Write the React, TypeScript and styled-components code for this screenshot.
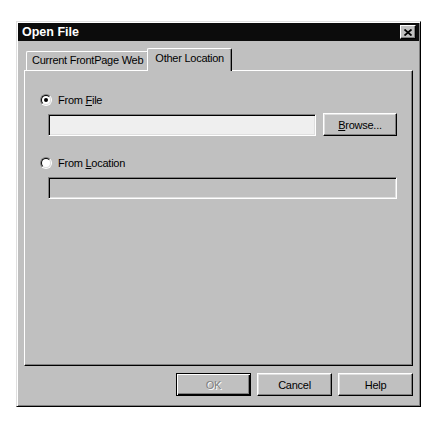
import React from "react";
import styled, { createGlobalStyle } from "styled-components";

const GlobalStyle = createGlobalStyle`
  html, body {
    margin: 0;
    padding: 0;
    background: #ffffff;
  }
  body {
    font-family: "Liberation Sans", Arial, sans-serif;
    font-size: 11px;
    letter-spacing: -0.25px;
    color: #000;
  }
`;

const Page = styled.div`
  padding: 21px 0 0 16px;
`;

const Dialog = styled.div`
  width: 405px;
  height: 386px;
  box-sizing: border-box;
  display: flex;
  flex-direction: column;
  background: #c0c0c0;
  border: 1px solid;
  border-color: #dfdfdf #000 #000 #dfdfdf;
  box-shadow: inset 1px 1px #fff, inset -1px -1px #808080;
  padding: 1px;
`;

const TitleBar = styled.div`
  height: 18px;
  display: flex;
  align-items: center;
  justify-content: space-between;
  background: #0c0c0c;
  padding: 0 3px 0 4px;
`;

const TitleText = styled.span`
  color: #fff;
  font-weight: bold;
  font-size: 12.5px;
  letter-spacing: 0;
`;

const CloseButton = styled.div`
  width: 14px;
  height: 12px;
  display: flex;
  align-items: center;
  justify-content: center;
  background: #c0c0c0;
  border: 1px solid;
  border-color: #fff #000 #000 #fff;
  box-shadow: inset -1px -1px #808080;
`;

const Body = styled.div`
  flex: 1;
  display: flex;
  flex-direction: column;
  padding: 7px 6px 9px 6px;
`;

const TabStrip = styled.div`
  display: flex;
  align-items: flex-end;
  height: 22px;
  padding-left: 2px;
  position: relative;
  z-index: 1;
`;

const Tab = styled.div<{ $active?: boolean }>`
  box-sizing: border-box;
  height: ${(p) => (p.$active ? "23px" : "19px")};
  margin-bottom: ${(p) => (p.$active ? "-1px" : "0")};
  margin-left: ${(p) => (p.$active ? "-2px" : "0")};
  padding: ${(p) => (p.$active ? "3px 7px 0 7px" : "2px 5px 0 5px")};
  background: #c0c0c0;
  border-top: 1px solid #fff;
  border-left: 1px solid #fff;
  border-right: 1px solid #000;
  border-top-left-radius: 2px;
  border-top-right-radius: 2px;
  box-shadow: inset -1px 0 #808080;
  white-space: nowrap;
`;

const Panel = styled.div`
  flex: 1;
  box-sizing: border-box;
  border: 1px solid;
  border-color: #fff #000 #000 #fff;
  box-shadow: inset -1px -1px #808080;
  padding: 22px 15px 0 15px;
  display: flex;
  flex-direction: column;
`;

const OptionRow = styled.label<{ $top?: number }>`
  display: flex;
  align-items: center;
  height: 13px;
  gap: 6px;
  margin-top: ${(p) => p.$top ?? 0}px;
`;

const RadioOuter = styled.span`
  width: 12px;
  height: 12px;
  box-sizing: border-box;
  border-radius: 50%;
  border: 1px solid;
  border-color: #808080 #fff #fff #808080;
  display: flex;
`;

const RadioInner = styled.span`
  flex: 1;
  border-radius: 50%;
  border: 1px solid;
  border-color: #000 #dfdfdf #dfdfdf #000;
  background: #fff;
  display: flex;
  align-items: center;
  justify-content: center;
`;

const RadioDot = styled.span`
  width: 4px;
  height: 4px;
  border-radius: 50%;
  background: #000;
`;

const FieldRow = styled.div<{ $top: number }>`
  display: flex;
  align-items: center;
  gap: 7px;
  margin: ${(p) => p.$top}px 0 0 8px;
`;

const TextField = styled.div<{ $disabled?: boolean }>`
  flex: 1;
  height: 22px;
  box-sizing: border-box;
  border: 1px solid;
  border-color: #808080 #fff #fff #808080;
  box-shadow: inset 1px 1px #000, inset -1px -1px #dfdfdf;
  background: ${(p) => (p.$disabled ? "#c0c0c0" : "#efefef")};
`;

const Button = styled.div<{ $width?: number; $default?: boolean; $disabled?: boolean }>`
  width: ${(p) => p.$width ?? 75}px;
  height: 23px;
  box-sizing: border-box;
  display: flex;
  align-items: center;
  justify-content: center;
  background: #c0c0c0;
  border: 1px solid;
  border-color: ${(p) => (p.$default ? "#000" : "#fff #000 #000 #fff")};
  box-shadow: ${(p) =>
    p.$default
      ? "inset 1px 1px #fff, inset -1px -1px #000, inset -2px -2px #808080"
      : "inset -1px -1px #808080, inset 1px 1px #dfdfdf"};
  color: ${(p) => (p.$disabled ? "#808080" : "#000")};
  text-shadow: ${(p) => (p.$disabled ? "1px 1px #fff" : "none")};
`;

const ButtonRow = styled.div`
  display: flex;
  justify-content: flex-end;
  gap: 6px;
  margin-top: 7px;
`;

const Radio = ({ checked }: { checked?: boolean }) => (
  <RadioOuter>
    <RadioInner>{checked && <RadioDot />}</RadioInner>
  </RadioOuter>
);

export default function App() {
  return (
    <Page>
      <GlobalStyle />
      <Dialog>
        <TitleBar>
          <TitleText>Open File</TitleText>
          <CloseButton>
            <svg width="8" height="7" viewBox="0 0 8 7">
              <path d="M0.5 0.5 L7.5 6.5 M7.5 0.5 L0.5 6.5" stroke="#000" strokeWidth="1.8" />
            </svg>
          </CloseButton>
        </TitleBar>
        <Body>
          <TabStrip>
            <Tab>Current FrontPage Web</Tab>
            <Tab $active>Other Location</Tab>
          </TabStrip>
          <Panel>
            <OptionRow>
              <Radio checked />
              <span>
                From <u>F</u>ile
              </span>
            </OptionRow>
            <FieldRow $top={7}>
              <TextField />
              <Button $width={74}>
                <span>
                  <u>B</u>rowse...
                </span>
              </Button>
            </FieldRow>
            <OptionRow $top={20}>
              <Radio />
              <span>
                From <u>L</u>ocation
              </span>
            </OptionRow>
            <FieldRow $top={8}>
              <TextField $disabled />
            </FieldRow>
          </Panel>
          <ButtonRow>
            <Button $default $disabled>OK</Button>
            <Button>Cancel</Button>
            <Button>Help</Button>
          </ButtonRow>
        </Body>
      </Dialog>
    </Page>
  );
}
